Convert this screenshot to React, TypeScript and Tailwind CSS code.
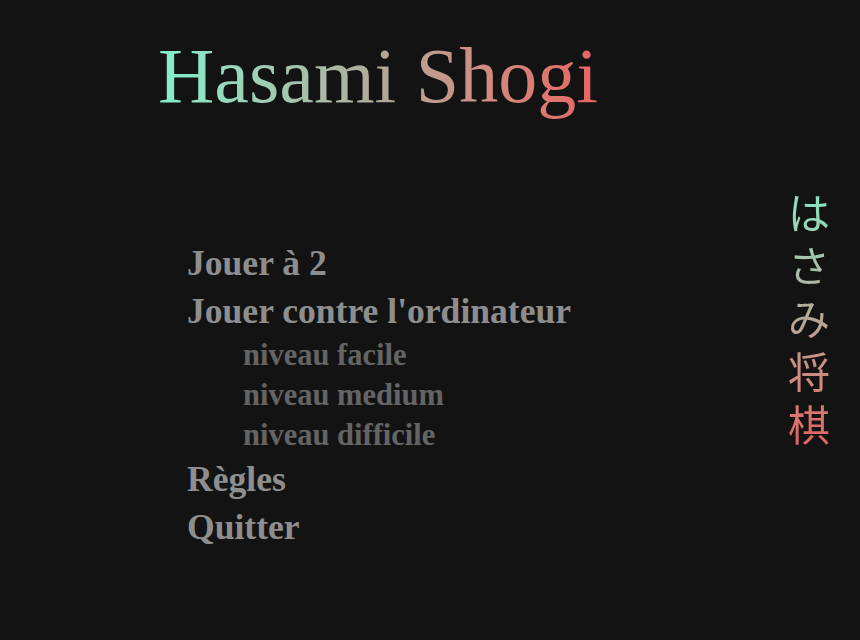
import React from 'react';

const serif = { fontFamily: '"Liberation Serif", "DejaVu Serif", serif' };

const MenuItem: React.FC<{ label: string }> = ({ label }) => (
  <li className="text-[35.6px] leading-[48px] font-bold text-[#8e8e8e]">{label}</li>
);

const SubItem: React.FC<{ label: string }> = ({ label }) => (
  <li className="pl-[56px] text-[30.5px] leading-[40px] font-bold text-[#646464]">{label}</li>
);

export default function App() {
  return (
    <div className="flex h-[640px] w-full bg-[#131313]" style={serif}>
      <div className="flex flex-1 flex-col pl-[158px] pt-[37px]">
        <h1 className="w-fit bg-gradient-to-r from-[#80f0ce] via-[#b0a999] to-[#e86464] bg-clip-text pb-[14px] text-[78px] leading-none text-transparent">
          Hasami Shogi
        </h1>
        <ul className="ml-[29px] mt-[110px]">
          <MenuItem label="Jouer à 2" />
          <MenuItem label="Jouer contre l'ordinateur" />
          <SubItem label="niveau facile" />
          <SubItem label="niveau medium" />
          <SubItem label="niveau difficile" />
          <MenuItem label="Règles" />
          <MenuItem label="Quitter" />
        </ul>
      </div>
      <div className="mr-[28px] pt-[184px]">
        <div
          className="flex w-[44px] flex-col bg-gradient-to-b from-[#7eeac6] via-[#b5a898] to-[#e45f60] bg-clip-text text-[42px] leading-[53px] text-transparent"
          style={{ fontFamily: '"Noto Sans CJK JP", sans-serif' }}
        >
          <span>は</span>
          <span>さ</span>
          <span>み</span>
          <span>将</span>
          <span>棋</span>
        </div>
      </div>
    </div>
  );
}
